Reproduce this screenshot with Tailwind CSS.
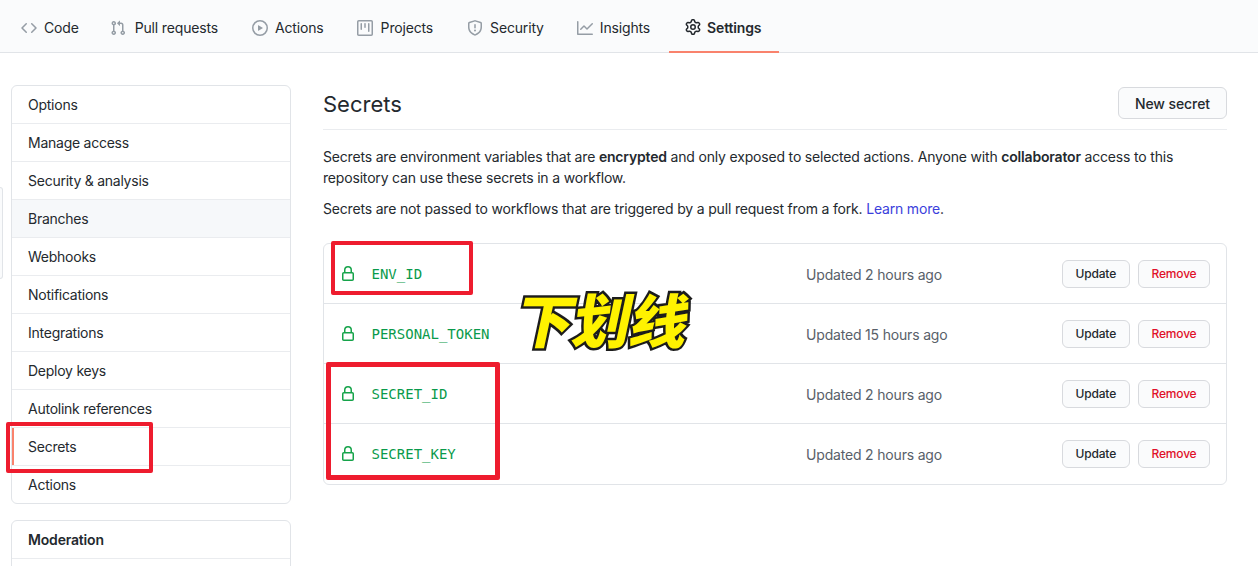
<!DOCTYPE html>
<html lang="zh">
<head>
  <meta charset="UTF-8">
  <title>Secrets</title>
  <script src="https://cdn.jsdelivr.net/npm/@tailwindcss/browser@4"></script>
</head>
<body class="relative h-[566px] w-[1258px] overflow-hidden bg-white font-['Inter','Liberation_Sans',sans-serif] text-[14px] tracking-[-0.18px] text-[#24292e]">
  <!-- repo tabs -->
  <nav class="flex h-[53px] items-stretch border-b border-[#e1e4e8] bg-[#fafbfc] pl-[5px] tracking-[-0.16px]">
    <a class="flex items-center gap-[7px] pt-[3px] pr-[15px] pl-4">
      <svg class="h-4 w-4 fill-[#959da5]" viewBox="0 0 16 16"><path d="M4.72 3.22a.75.75 0 011.06 1.06L2.06 8l3.72 3.72a.75.75 0 11-1.06 1.06L.47 8.53a.75.75 0 010-1.06l4.25-4.25zm6.56 0a.75.75 0 10-1.06 1.06L13.94 8l-3.72 3.72a.75.75 0 101.06 1.06l4.25-4.25a.75.75 0 000-1.06l-4.25-4.25z"/></svg>
      Code
    </a>
    <a class="flex items-center gap-[9px] pt-[3px] pr-[17px] pl-4">
      <svg class="h-4 w-4 fill-[#959da5]" viewBox="0 0 16 16"><path fill-rule="evenodd" d="M7.177 3.073L9.573.677A.25.25 0 0110 .854v4.792a.25.25 0 01-.427.177L7.177 3.427a.25.25 0 010-.354zM3.75 2.5a.75.75 0 100 1.5.75.75 0 000-1.5zm-2.25.75a2.25 2.25 0 113 2.122v5.256a2.251 2.251 0 11-1.5 0V5.372A2.25 2.25 0 011.5 3.25zM11 2.5h-1V4h1a1 1 0 011 1v5.628a2.251 2.251 0 101.5 0V5A2.5 2.5 0 0011 2.5zm1 10.25a.75.75 0 111.5 0 .75.75 0 01-1.5 0zM3.75 12a.75.75 0 100 1.5.75.75 0 000-1.5z"/></svg>
      Pull requests
    </a>
    <a class="flex items-center gap-[7px] px-[17px] pt-[3px]">
      <svg class="h-4 w-4 fill-[#959da5]" viewBox="0 0 16 16"><path fill-rule="evenodd" d="M1.5 8a6.5 6.5 0 1113 0 6.5 6.5 0 01-13 0zM8 0a8 8 0 100 16A8 8 0 008 0zM6.379 5.227A.25.25 0 006 5.442v5.117a.25.25 0 00.379.214l4.264-2.559a.25.25 0 000-.428L6.379 5.227z"/></svg>
      Actions
    </a>
    <a class="flex items-center gap-2 px-[16px] pt-[3px]">
      <svg class="h-4 w-4 fill-[#959da5]" viewBox="0 0 16 16"><path fill-rule="evenodd" d="M1.75 0A1.75 1.75 0 000 1.75v12.5C0 15.216.784 16 1.75 16h12.5A1.75 1.75 0 0016 14.25V1.75A1.75 1.75 0 0014.25 0H1.75zM1.5 1.75a.25.25 0 01.25-.25h12.5a.25.25 0 01.25.25v12.5a.25.25 0 01-.25.25H1.75a.25.25 0 01-.25-.25V1.75zM11.75 3a.75.75 0 00-.75.75v7.5a.75.75 0 001.5 0v-7.5a.75.75 0 00-.75-.75zm-8.25.75a.75.75 0 011.5 0v5.5a.75.75 0 01-1.5 0v-5.5zM8 3a.75.75 0 00-.75.75v3.5a.75.75 0 001.5 0v-3.5A.75.75 0 008 3z"/></svg>
      Projects
    </a>
    <a class="flex items-center gap-[7px] pt-[3px] pr-4 pl-[18px]">
      <svg class="h-4 w-4 fill-[#959da5]" viewBox="0 0 16 16"><path fill-rule="evenodd" d="M7.467.133a1.75 1.75 0 011.066 0l5.25 1.68A1.75 1.75 0 0115 3.48V7c0 1.566-.32 3.182-1.303 4.682-.983 1.498-2.585 2.813-5.032 3.855a1.7 1.7 0 01-1.33 0c-2.447-1.042-4.049-2.357-5.032-3.855C1.32 10.182 1 8.566 1 7V3.48a1.75 1.75 0 011.217-1.667l5.25-1.68zm.61 1.429a.25.25 0 00-.153 0l-5.25 1.68a.25.25 0 00-.174.238V7c0 1.358.275 2.666 1.057 3.86.784 1.194 2.121 2.34 4.366 3.297a.2.2 0 00.154 0c2.245-.956 3.582-2.104 4.366-3.298C13.225 9.666 13.5 8.36 13.5 7V3.48a.25.25 0 00-.174-.237l-5.25-1.68zM9 10.5a1 1 0 11-2 0 1 1 0 012 0zm-.25-5.75a.75.75 0 10-1.5 0v3a.75.75 0 001.5 0v-3z"/></svg>
      Security
    </a>
    <a class="flex items-center gap-[7px] pt-[3px] pr-[18px] pl-[17px]">
      <svg class="h-4 w-4 fill-[#959da5]" viewBox="0 0 16 16"><path d="M1.5 1.75a.75.75 0 00-1.5 0v12.5c0 .414.336.75.75.75h14.5a.75.75 0 000-1.5H1.5V1.75zm14.28 2.53a.75.75 0 00-1.06-1.06L10 7.94 7.53 5.47a.75.75 0 00-1.06 0L3.22 8.72a.75.75 0 001.06 1.06L7 7.06l2.47 2.47a.75.75 0 001.06 0l5.25-5.25z"/></svg>
      Insights
    </a>
    <a class="-mb-px ml-[1px] flex items-center gap-[6px] border-b-2 border-[#f9826c] pt-[3px] pr-[18px] pl-4 font-semibold">
      <svg class="h-4 w-4 fill-[#24292e]" viewBox="0 0 16 16"><path fill-rule="evenodd" d="M7.429 1.525a6.593 6.593 0 011.142 0c.036.003.108.036.137.146l.289 1.105c.147.56.55.967.997 1.189.174.086.341.183.501.29.417.278.97.423 1.53.27l1.102-.303c.11-.03.175.016.195.046.219.31.41.641.573.989.014.031.022.11-.059.19l-.815.806c-.411.406-.562.957-.53 1.456a4.588 4.588 0 010 .582c-.032.499.119 1.05.53 1.456l.815.806c.08.08.073.159.059.19a6.494 6.494 0 01-.573.99c-.02.029-.086.074-.195.045l-1.103-.303c-.559-.153-1.112-.008-1.529.27-.16.107-.327.204-.5.29-.449.222-.851.628-.998 1.189l-.289 1.105c-.029.11-.101.143-.137.146a6.613 6.613 0 01-1.142 0c-.036-.003-.108-.037-.137-.146l-.289-1.105c-.147-.56-.55-.967-.997-1.189a4.502 4.502 0 01-.501-.29c-.417-.278-.97-.423-1.53-.27l-1.102.303c-.11.03-.175-.016-.195-.046a6.492 6.492 0 01-.573-.989c-.014-.031-.022-.11.059-.19l.815-.806c.411-.406.562-.957.53-1.456a4.587 4.587 0 010-.582c.032-.499-.119-1.05-.53-1.456l-.815-.806c-.08-.08-.073-.159-.059-.19a6.44 6.44 0 01.573-.99c.02-.029.086-.075.195-.045l1.103.303c.559.153 1.112.008 1.529-.27.16-.107.327-.204.5-.29.449-.222.851-.628.998-1.189l.289-1.105c.029-.11.101-.143.137-.146zM8 0c-.236 0-.47.01-.701.03-.743.065-1.29.615-1.458 1.261l-.29 1.106c-.017.066-.078.158-.211.224a5.994 5.994 0 00-.668.386c-.123.082-.233.09-.3.071L3.27 2.776c-.644-.177-1.392.02-1.82.63a7.977 7.977 0 00-.704 1.217c-.315.675-.111 1.422.363 1.891l.815.806c.05.048.098.147.088.294a6.084 6.084 0 000 .772c.01.147-.038.246-.088.294l-.815.806c-.474.469-.678 1.216-.363 1.891.2.428.436.835.704 1.218.428.609 1.176.806 1.82.63l1.103-.303c.066-.019.176-.011.299.071.213.143.436.272.668.386.133.066.194.158.212.224l.289 1.106c.169.646.715 1.196 1.458 1.26a8.094 8.094 0 001.402 0c.743-.064 1.29-.614 1.458-1.26l.29-1.106c.017-.066.078-.158.211-.224a5.98 5.98 0 00.668-.386c.123-.082.233-.09.3-.071l1.102.302c.644.177 1.392-.02 1.82-.63.268-.382.505-.789.704-1.217.315-.675.111-1.422-.364-1.891l-.814-.806c-.05-.048-.098-.147-.088-.294a6.1 6.1 0 000-.772c-.01-.147.039-.246.088-.294l.814-.806c.475-.469.679-1.216.364-1.891a7.992 7.992 0 00-.704-1.218c-.428-.609-1.176-.806-1.82-.63l-1.103.303c-.066.019-.176.011-.299-.071a5.991 5.991 0 00-.668-.386c-.133-.066-.194-.158-.212-.224L10.16 1.29C9.99.645 9.444.095 8.701.031A8.094 8.094 0 008 0zm1.5 8a1.5 1.5 0 11-3 0 1.5 1.5 0 013 0zM11 8a3 3 0 11-6 0 3 3 0 016 0z"/></svg>
      Settings
    </a>
  </nav>

  <!-- sliver of a panel at the window edge -->
  <div class="absolute top-[187px] left-0 h-[92px] w-[3px] rounded-r-[3px] border border-l-0 border-[#e1e4e8] bg-[#fafbfc]"></div>

  <div class="flex gap-8 pt-8 pl-[11px]">
    <!-- sidebar -->
    <aside class="w-[280px] shrink-0">
      <div class="overflow-hidden rounded-md border border-[#e1e4e8] tracking-[-0.25px] [&>a]:block [&>a]:h-[38px] [&>a]:border-b [&>a]:border-[#eaecef] [&>a]:px-4 [&>a]:leading-[37px]">
        <a>Options</a>
        <a>Manage access</a>
        <a>Security &amp; analysis</a>
        <a class="bg-[#f6f8fa]">Branches</a>
        <a>Webhooks</a>
        <a>Notifications</a>
        <a>Integrations</a>
        <a>Deploy keys</a>
        <a>Autolink references</a>
        <a class="relative">Secrets<span class="absolute top-0 left-0 h-full w-[2px] bg-[#f9826c]"></span></a>
        <a class="!h-[37px] !border-b-0">Actions</a>
      </div>
      <div class="mt-4 overflow-hidden rounded-t-md border border-[#e1e4e8]">
        <h3 class="h-[38px] border-b border-[#eaecef] px-4 leading-[37px] font-semibold">Moderation</h3>
        <div class="h-[20px]"></div>
      </div>
    </aside>

    <!-- main column -->
    <main class="w-[904px] shrink-0">
      <div class="flex h-[45px] items-start justify-between border-b border-[#eaecef] pt-[2px]">
        <h2 class="text-[22px] leading-[34px] font-normal tracking-normal">Secrets</h2>
        <button class="h-8 rounded-md border border-[#d8dade] bg-[#fafbfc] px-4 font-medium tracking-[-0.08px]">New secret</button>
      </div>
      <p class="mt-4 leading-[21px]">Secrets are environment variables that are <b class="font-semibold">encrypted</b> and only exposed to selected actions. Anyone with <b class="font-semibold">collaborator</b> access to this repository can use these secrets in a workflow.</p>
      <p class="mt-[10px] leading-[21px]">Secrets are not passed to workflows that are triggered by a pull request from a fork. <a class="text-[#3b3fdc]">Learn more</a>.</p>

      <div class="mt-6 rounded-md border border-[#e1e4e8]">
        <div class="flex h-[60px] items-center border-b border-[#e1e4e8] pr-4 pl-4">
          <svg class="h-4 w-4 fill-[#16a34a]" viewBox="0 0 16 16"><path fill-rule="evenodd" d="M4 4v2h-.25A1.75 1.75 0 002 7.75v5.5c0 .966.784 1.75 1.75 1.75h8.5A1.75 1.75 0 0014 13.25v-5.5A1.75 1.75 0 0012.25 6H12V4a4 4 0 10-8 0zm6.5 2V4a2.5 2.5 0 00-5 0v2h5zM12 7.5h.25a.25.25 0 01.25.25v5.5a.25.25 0 01-.25.25h-8.5a.25.25 0 01-.25-.25v-5.5a.25.25 0 01.25-.25H12z"/></svg>
          <code class="ml-[15.5px] w-[434.5px] pt-[2px] font-['DejaVu_Sans_Mono',monospace] text-[14px] tracking-normal text-[#0a9a4b]">ENV_ID</code>
          <span class="pt-[2px] text-[#586069]">Updated 2 hours ago</span>
          <button class="ml-auto h-7 rounded-md border border-[#d8dade] bg-[#fafbfc] px-[13px] text-[12px] font-medium">Update</button>
          <button class="ml-2 h-7 rounded-md border border-[#d8dade] bg-[#fafbfc] px-[12.5px] text-[12px] font-medium text-[#e0102a]">Remove</button>
        </div>
        <div class="flex h-[60px] items-center border-b border-[#e1e4e8] pr-4 pl-4">
          <svg class="h-4 w-4 fill-[#16a34a]" viewBox="0 0 16 16"><path fill-rule="evenodd" d="M4 4v2h-.25A1.75 1.75 0 002 7.75v5.5c0 .966.784 1.75 1.75 1.75h8.5A1.75 1.75 0 0014 13.25v-5.5A1.75 1.75 0 0012.25 6H12V4a4 4 0 10-8 0zm6.5 2V4a2.5 2.5 0 00-5 0v2h5zM12 7.5h.25a.25.25 0 01.25.25v5.5a.25.25 0 01-.25.25h-8.5a.25.25 0 01-.25-.25v-5.5a.25.25 0 01.25-.25H12z"/></svg>
          <code class="ml-[15.5px] w-[434.5px] pt-[2px] font-['DejaVu_Sans_Mono',monospace] text-[14px] tracking-normal text-[#0a9a4b]">PERSONAL_TOKEN</code>
          <span class="pt-[2px] text-[#586069]">Updated 15 hours ago</span>
          <button class="ml-auto h-7 rounded-md border border-[#d8dade] bg-[#fafbfc] px-[13px] text-[12px] font-medium">Update</button>
          <button class="ml-2 h-7 rounded-md border border-[#d8dade] bg-[#fafbfc] px-[12.5px] text-[12px] font-medium text-[#e0102a]">Remove</button>
        </div>
        <div class="flex h-[60px] items-center border-b border-[#e1e4e8] pr-4 pl-4">
          <svg class="h-4 w-4 fill-[#16a34a]" viewBox="0 0 16 16"><path fill-rule="evenodd" d="M4 4v2h-.25A1.75 1.75 0 002 7.75v5.5c0 .966.784 1.75 1.75 1.75h8.5A1.75 1.75 0 0014 13.25v-5.5A1.75 1.75 0 0012.25 6H12V4a4 4 0 10-8 0zm6.5 2V4a2.5 2.5 0 00-5 0v2h5zM12 7.5h.25a.25.25 0 01.25.25v5.5a.25.25 0 01-.25.25h-8.5a.25.25 0 01-.25-.25v-5.5a.25.25 0 01.25-.25H12z"/></svg>
          <code class="ml-[15.5px] w-[434.5px] pt-[2px] font-['DejaVu_Sans_Mono',monospace] text-[14px] tracking-normal text-[#0a9a4b]">SECRET_ID</code>
          <span class="pt-[2px] text-[#586069]">Updated 2 hours ago</span>
          <button class="ml-auto h-7 rounded-md border border-[#d8dade] bg-[#fafbfc] px-[13px] text-[12px] font-medium">Update</button>
          <button class="ml-2 h-7 rounded-md border border-[#d8dade] bg-[#fafbfc] px-[12.5px] text-[12px] font-medium text-[#e0102a]">Remove</button>
        </div>
        <div class="flex h-[60px] items-center pr-4 pl-4">
          <svg class="h-4 w-4 fill-[#16a34a]" viewBox="0 0 16 16"><path fill-rule="evenodd" d="M4 4v2h-.25A1.75 1.75 0 002 7.75v5.5c0 .966.784 1.75 1.75 1.75h8.5A1.75 1.75 0 0014 13.25v-5.5A1.75 1.75 0 0012.25 6H12V4a4 4 0 10-8 0zm6.5 2V4a2.5 2.5 0 00-5 0v2h5zM12 7.5h.25a.25.25 0 01.25.25v5.5a.25.25 0 01-.25.25h-8.5a.25.25 0 01-.25-.25v-5.5a.25.25 0 01.25-.25H12z"/></svg>
          <code class="ml-[15.5px] w-[434.5px] font-['DejaVu_Sans_Mono',monospace] text-[14px] tracking-normal text-[#0a9a4b]">SECRET_KEY</code>
          <span class="text-[#586069]">Updated 2 hours ago</span>
          <button class="ml-auto h-7 rounded-md border border-[#d8dade] bg-[#fafbfc] px-[13px] text-[12px] font-medium">Update</button>
          <button class="ml-2 h-7 rounded-md border border-[#d8dade] bg-[#fafbfc] px-[12.5px] text-[12px] font-medium text-[#e0102a]">Remove</button>
        </div>
      </div>
    </main>
  </div>

  <!-- red annotation boxes drawn over the screenshot -->
  <div class="absolute top-[422px] left-[6px] h-[51px] w-[147px] rounded-[2px] border-[4px] border-[#ee1c2e]"></div>
  <div class="absolute top-[241px] left-[331px] h-[54px] w-[142px] rounded-[2px] border-[4px] border-[#ee1c2e]"></div>
  <div class="absolute top-[362px] left-[326px] h-[118px] w-[174px] rounded-[2px] border-[5px] border-[#ee1c2e]"></div>
  <div class="absolute top-[280px] left-[518px] -skew-x-12 font-['Noto_Sans_CJK_SC',sans-serif] text-[58px] leading-[76px] font-black tracking-[-1px] text-[#fff200] [-webkit-text-stroke:5px_#1c1c1c] [paint-order:stroke_fill]">下划线</div>
</body>
</html>
